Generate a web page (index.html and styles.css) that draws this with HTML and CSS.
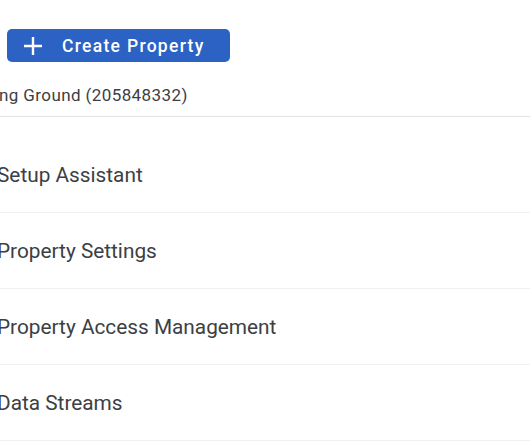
FILE: index.html
```html
<!DOCTYPE html>
<html>
<head>
<meta charset="utf-8">
<link rel="stylesheet" href="styles.css">
</head>
<body>
<div class="panel">
  <div class="head">
    <button class="create">
      <svg class="plus" width="20" height="20" viewBox="0 0 20 20"><path d="M10 1v18M1 10h18" stroke="#fff" stroke-width="2.4" fill="none"/></svg>
      <span>Create Property</span>
    </button>
    <div class="account">ng Ground (205848332)</div>
  </div>
  <ul class="menu">
    <li>Setup Assistant</li>
    <li>Property Settings</li>
    <li>Property Access Management</li>
    <li>Data Streams</li>
  </ul>
</div>
</body>
</html>
```

FILE: styles.css
```css
html, body {
  margin: 0;
  padding: 0;
  background: #fff;
  overflow: hidden;
  width: 530px;
  height: 442px;
}
.panel {
  font-family: Roboto, "Noto Sans", sans-serif;
  color: #3c4043;
}
.head {
  padding-top: 29px;
  border-bottom: 1px solid #e2e2e2;
}
.create {
  display: flex;
  align-items: center;
  margin-left: 7px;
  width: 223px;
  height: 33px;
  padding: 0 0 0 16px;
  border: none;
  border-radius: 5px;
  background: #2b62c4;
  color: #fff;
  font-family: Roboto, sans-serif;
  font-weight: 500;
  font-size: 17.5px;
  letter-spacing: 1.3px;
  gap: 19px;
}
.plus {
  flex: none;
}
.account {
  font-size: 17px;
  letter-spacing: 0.4px;
  line-height: 20px;
  padding-top: 23px;
  padding-bottom: 11px;
  margin-left: -1px;
}
.menu {
  list-style: none;
  margin: 0;
  padding: 0;
}
.menu li {
  height: 75px;
  line-height: 76px;
  font-size: 20.8px;
  margin-left: -3px;
  border-bottom: 1px solid #f1f1f1;
}
.menu li:first-child {
  padding-top: 20px;
}
```
